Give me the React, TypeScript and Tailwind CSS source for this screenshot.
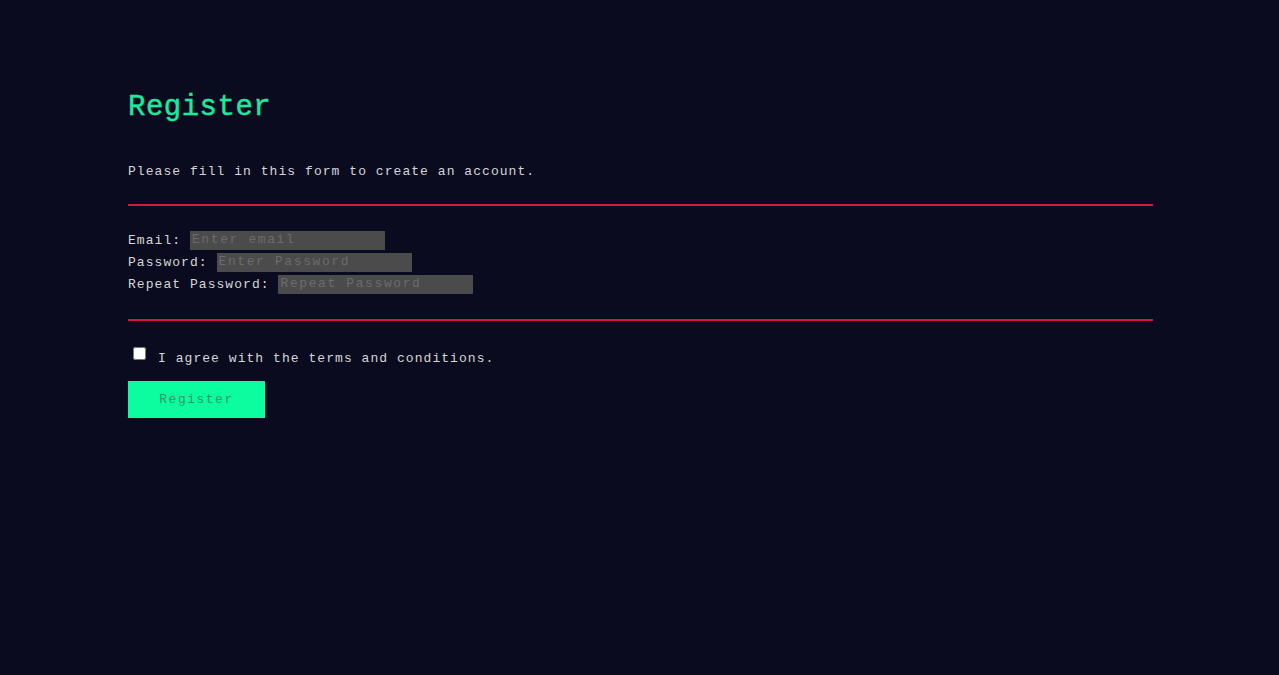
export default function App() {
  const mono = { fontFamily: '"Liberation Mono", "DejaVu Sans Mono", monospace' };

  return (
    <div className="min-h-screen w-full bg-[#0a0b1f]" style={mono}>
      <form className="w-[1025px] ml-[128px] pt-[91px]" onSubmit={(e) => e.preventDefault()}>
        <h1 className="text-[29px] leading-[33px] tracking-[0.5px] text-[#1ee99f] m-0 [-webkit-text-stroke:0.4px_#1ee99f]">
          Register
        </h1>
        <p className="mt-[40px] text-[13px] leading-[15px] tracking-[1.05px] text-[#d6d6d6]">
          Please fill in this form to create an account.
        </p>
        <hr className="mt-[25px] border-0 border-t-2 border-[#dc143c]" />

        <div className="mt-[23px] flex flex-col">
          <Row label="Email:" placeholder="Enter email" type="text" />
          <Row label="Password:" placeholder="Enter Password" type="password" />
          <Row label="Repeat Password:" placeholder="Repeat Password" type="password" />
        </div>

        <hr className="mt-[24px] border-0 border-t-2 border-[#dc143c]" />

        <label className="mt-[25px] flex items-start">
          <input type="checkbox" className="mt-[1px] ml-[5px] w-[13px] h-[13px] bg-white" />
          <span className="ml-[12px] mt-[5px] text-[13px] leading-[15px] tracking-[1.05px] text-[#d6d6d6]">
            I agree with the terms and conditions.
          </span>
        </label>

        <button
          type="submit"
          className="mt-[15px] w-[137px] h-[37px] bg-[#0cfca0] text-[#2e9a62] text-[13px] tracking-[1.5px]"
        >
          Register
        </button>
      </form>
    </div>
  );
}

function Row({ label, placeholder, type }: { label: string; placeholder: string; type: string }) {
  return (
    <div className="flex items-center h-[22px]">
      <span className="text-[13px] leading-[15px] tracking-[1.05px] text-[#d6d6d6] whitespace-pre">
        {label + " "}
      </span>
      <input
        type={type}
        placeholder={placeholder}
        className="w-[195px] h-[19px] bg-[#4b4b4b] px-[2px] text-[13px] tracking-[1.6px] text-[#cfcfcf] placeholder:text-[#6c6c6c] outline-none"
      />
    </div>
  );
}
